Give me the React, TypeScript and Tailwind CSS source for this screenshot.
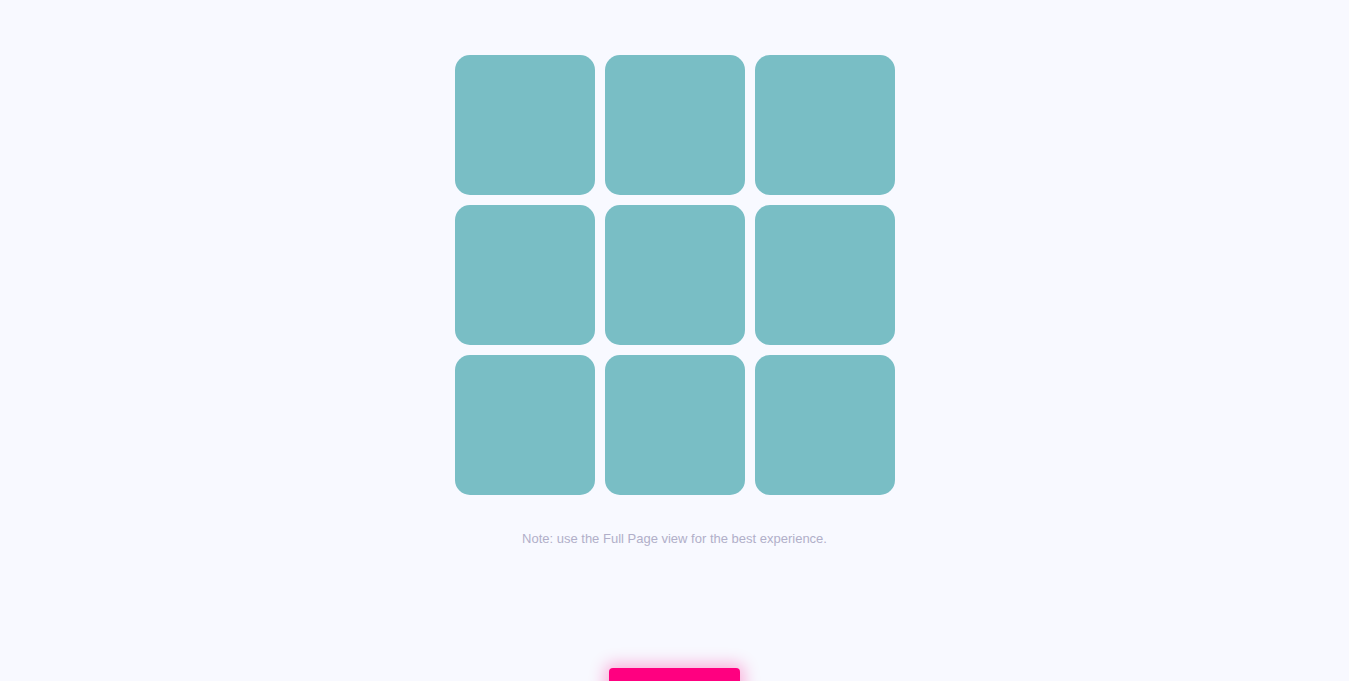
import React from 'react';

const tiles = Array.from({ length: 9 }, (_, i) => i);

const App = () => {
  return (
    <div className="min-h-screen bg-[#f8f9ff] flex flex-col items-center pt-[55px] font-['Liberation_Sans',Arial,sans-serif]">
      <div className="grid grid-cols-[repeat(3,140px)] gap-[10px]">
        {tiles.map((t) => (
          <div key={t} className="w-[140px] h-[140px] rounded-[15px] bg-[#79bec5]" />
        ))}
      </div>
      <p className="mt-[36px] text-[13px] leading-[16px] text-[#b1afc9]">
        Note: use the Full Page view for the best experience.
      </p>
      <button
        type="button"
        aria-label="Start"
        className="mt-[121px] w-[131px] h-[44px] rounded-[4px] bg-[#ff0080] shadow-[0_0_16px_4px_rgba(255,0,128,0.3)]"
      />
    </div>
  );
};

export default App;
